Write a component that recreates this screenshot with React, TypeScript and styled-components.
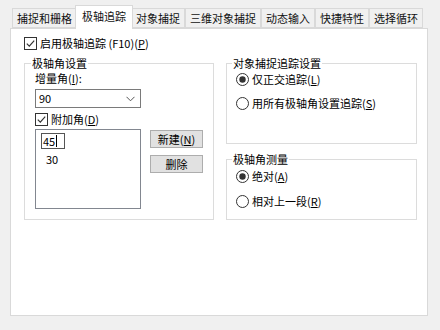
import styled, { createGlobalStyle } from "styled-components";

const GlobalStyle = createGlobalStyle`
  html, body {
    margin: 0;
    padding: 0;
    background: #f0f0f0;
  }
  body {
    font-family: "Noto Sans CJK SC", "Noto Sans", sans-serif;
    font-size: 11px;
    color: #000;
  }
`;

const tabs = ["捕捉和栅格", "极轴追踪", "对象捕捉", "三维对象捕捉", "动态输入", "快捷特性", "选择循环"];

const Window = styled.div`
  width: 440px;
  height: 330px;
  padding: 5px 0 0 10px;
  box-sizing: border-box;
  background: #f0f0f0;
`;

const TabBar = styled.div`
  display: flex;
  align-items: flex-end;
  height: 23px;
  padding-left: 2px;
`;

const Tab = styled.div<{ $active?: boolean }>`
  position: relative;
  box-sizing: border-box;
  height: ${(p) => (p.$active ? "24px" : "20px")};
  padding: ${(p) => (p.$active ? "0 6px" : "0 4px")};
  margin: ${(p) => (p.$active ? "0 -2px -1px" : "0")};
  line-height: ${(p) => (p.$active ? "21px" : "18px")};
  background: ${(p) => (p.$active ? "#fff" : "#f0f0f0")};
  border: 1px solid #d9d9d9;
  border-bottom: ${(p) => (p.$active ? "none" : "1px solid #d9d9d9")};
  z-index: ${(p) => (p.$active ? 2 : 1)};
  white-space: nowrap;
  color: #111;
`;

const Panel = styled.div`
  width: 418px;
  height: 288px;
  box-sizing: border-box;
  background: #fff;
  border: 1px solid #d9d9d9;
  padding: 8px 12px 0 13px;
`;

const Row = styled.label`
  display: flex;
  align-items: center;
  gap: 3px;
  height: 13px;
  line-height: 13px;
  white-space: nowrap;
`;

const Columns = styled.div`
  display: grid;
  grid-template-columns: 190px 191px;
  column-gap: 12px;
  margin-top: 6px;
  align-items: start;
`;

const Stack = styled.div`
  display: flex;
  flex-direction: column;
  gap: 8px;
`;

const Group = styled.fieldset<{ $pad: string; $side: number }>`
  margin: 0;
  min-width: 0;
  border: 1px solid #dcdcdc;
  padding: ${(p) => p.$pad};
  padding-left: ${(p) => p.$side}px;
  padding-right: ${(p) => p.$side}px;
  display: flex;
  flex-direction: column;
`;

const Legend = styled.legend`
  margin-left: -4px;
  padding: 0 1px;
  line-height: 14px;
  font-size: 11px;
`;

const FieldLabel = styled.div`
  line-height: 14px;
  height: 14px;
`;

const Combo = styled.div`
  display: flex;
  align-items: center;
  justify-content: space-between;
  box-sizing: border-box;
  width: 106px;
  height: 19px;
  margin-top: 4px;
  padding: 0 5px 0 3px;
  border: 1px solid #7a7a7a;
  background: #fff;
  line-height: 17px;
`;

const ListRow = styled.div`
  display: flex;
  gap: 9px;
  margin-top: 3px;
`;

const ListBox = styled.div`
  box-sizing: border-box;
  width: 106px;
  height: 80px;
  border: 1px solid #828790;
  background: #fff;
  padding: 3px 0 0 5px;
  display: flex;
  flex-direction: column;
`;

const EditItem = styled.div`
  display: flex;
  align-items: center;
  box-sizing: border-box;
  width: 24px;
  height: 16px;
  border: 1px solid #555;
  padding-left: 1px;
  line-height: 14px;
`;

const Caret = styled.span`
  display: inline-block;
  width: 1px;
  height: 12px;
  background: #000;
  margin-left: 1px;
`;

const ListItem = styled.div`
  line-height: 14px;
  padding: 3px 0 0 5px;
`;

const Buttons = styled.div`
  display: flex;
  flex-direction: column;
  gap: 7px;
  padding-top: 1px;
`;

const Button = styled.button`
  box-sizing: border-box;
  width: 53px;
  height: 18px;
  padding: 0;
  background: #e1e1e1;
  border: 1px solid #adadad;
  font-family: inherit;
  font-size: 11px;
  line-height: 16px;
  color: #000;
`;

const RadioList = styled.div<{ $gap: number }>`
  display: flex;
  flex-direction: column;
  gap: ${(p) => p.$gap}px;
`;

const CheckBox = ({ checked }: { checked?: boolean }) => (
  <svg width="13" height="13" viewBox="0 0 13 13">
    <rect x="0.5" y="0.5" width="12" height="12" fill="#fff" stroke="#333" />
    {checked && <path d="M2.8 6.6 L5.3 9.1 L10.2 3.6" fill="none" stroke="#333" strokeWidth="1.2" />}
  </svg>
);

const Radio = ({ checked }: { checked?: boolean }) => (
  <svg width="13" height="13" viewBox="0 0 13 13">
    <circle cx="6.5" cy="6.5" r="6" fill="#fff" stroke="#333" />
    {checked && <circle cx="6.5" cy="6.5" r="3.2" fill="#333" />}
  </svg>
);

const Chevron = () => (
  <svg width="9" height="6" viewBox="0 0 9 6">
    <path d="M0.5 0.8 L4.5 4.8 L8.5 0.8" fill="none" stroke="#555" strokeWidth="1" />
  </svg>
);

export default function App() {
  return (
    <>
      <GlobalStyle />
      <Window>
        <TabBar>
          {tabs.map((t, i) => (
            <Tab key={t} $active={i === 1}>
              {t}
            </Tab>
          ))}
        </TabBar>
        <Panel>
          <Row>
            <CheckBox checked />
            <span>
              启用极轴追踪 (F10)(<u>P</u>)
            </span>
          </Row>
          <Columns>
            <Group $pad="1px 0 10px" $side={10}>
              <Legend>极轴角设置</Legend>
              <FieldLabel>
                增量角(<u>I</u>):
              </FieldLabel>
              <Combo>
                <span>90</span>
                <Chevron />
              </Combo>
              <Row style={{ marginTop: 5 }}>
                <CheckBox checked />
                <span>
                  附加角(<u>D</u>)
                </span>
              </Row>
              <ListRow>
                <ListBox>
                  <EditItem>
                    45
                    <Caret />
                  </EditItem>
                  <ListItem>30</ListItem>
                </ListBox>
                <Buttons>
                  <Button>
                    新建(<u>N</u>)
                  </Button>
                  <Button>删除</Button>
                </Buttons>
              </ListRow>
            </Group>
            <Stack>
              <Group $pad="3px 0 33px" $side={9}>
                <Legend>对象捕捉追踪设置</Legend>
                <RadioList $gap={11}>
                  <Row>
                    <Radio checked />
                    <span>
                      仅正交追踪(<u>L</u>)
                    </span>
                  </Row>
                  <Row>
                    <Radio />
                    <span>
                      用所有极轴角设置追踪(<u>S</u>)
                    </span>
                  </Row>
                </RadioList>
              </Group>
              <Group $pad="4px 0 11px" $side={9}>
                <Legend>极轴角测量</Legend>
                <RadioList $gap={12}>
                  <Row>
                    <Radio checked />
                    <span>
                      绝对(<u>A</u>)
                    </span>
                  </Row>
                  <Row>
                    <Radio />
                    <span>
                      相对上一段(<u>R</u>)
                    </span>
                  </Row>
                </RadioList>
              </Group>
            </Stack>
          </Columns>
        </Panel>
      </Window>
    </>
  );
}
